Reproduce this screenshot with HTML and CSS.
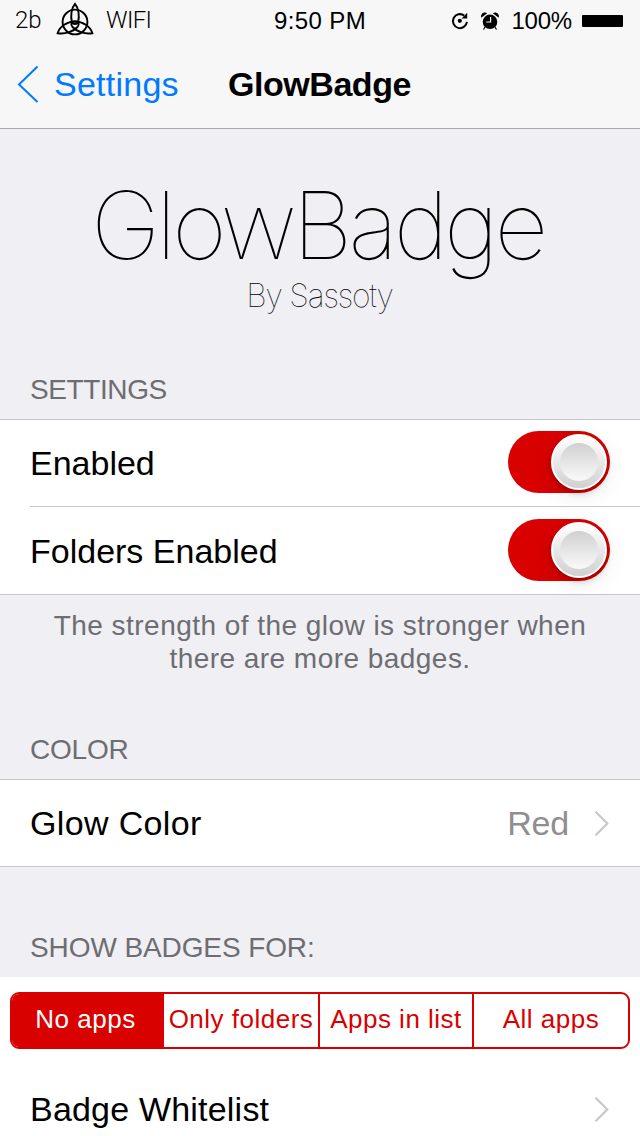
FILE: index.html
```html
<!DOCTYPE html>
<html lang="en">
<head>
<meta charset="utf-8">
<title>GlowBadge</title>
<link rel="stylesheet" href="styles.css">
</head>
<body>
<header class="top">
  <div class="status">
    <div class="status-left">
      <span class="carrier">2b</span>
      <svg class="trefoil" width="38" height="34" viewBox="0 0 38 34" fill="none" stroke="#000" stroke-width="1.900">
        <circle cx="19" cy="20" r="12.400"/>
        <path d="M19 1.800C15.300 6 14.300 14 16 20.500C17 22.500 21 22.500 22 20.500C23.700 14 22.700 6 19 1.800Z"/>
        <path d="M1.600 31.200C3.500 25 11 19 20 19.500C23 20 23.500 22.500 21.500 25C17 30 9 32.400 1.600 31.200Z"/>
        <path d="M36.400 31.200C34.500 25 27 19 18 19.500C15 20 14.500 22.500 16.500 25C21 30 29 32.400 36.400 31.200Z"/>
      </svg>
      <span class="network">WIFI</span>
    </div>
    <span class="clock">9:50 PM</span>
    <div class="status-right">
      <svg width="18" height="20" viewBox="0 0 18 20" fill="none" stroke="#000" stroke-width="2">
        <path d="M13.200 4.600A7 7 0 1 0 15.900 10.800"/>
        <path d="M16.200 1.800V7.500H10.500Z" fill="#000" stroke="none"/>
        <circle cx="8.800" cy="9.800" r="2.100" fill="#000" stroke="none"/>
      </svg>
      <svg class="alarm" width="20" height="20" viewBox="0 0 20 20">
        <circle cx="10" cy="10.800" r="7.300"/>
        <path d="M1.300 6.700C.2 3 4 .3 7.200 2.300ZM18.700 6.700C19.800 3 16 .3 12.800 2.300Z"/>
        <path d="M5 16L3.500 18.500M15 16L16.500 18.500" stroke="#000" stroke-width="1.200"/>
        <path d="M10.600 6V11H6.300" fill="none" stroke="#f7f7f7" stroke-width="1.200"/>
      </svg>
      <span class="percent">100%</span>
      <span class="battery"></span>
    </div>
  </div>
  <nav class="nav">
    <a class="back">
      <svg width="22" height="38" viewBox="0 0 22 38" fill="none" stroke="#007aff" stroke-width="2"><path d="M20.500 1.500L2 19.500L20.500 37"/></svg>
      <span>Settings</span>
    </a>
    <h1 class="title">GlowBadge</h1>
  </nav>
</header>
<main>
  <section class="hero">
    <div class="logo">GlowBadge</div>
    <div class="author">By Sassoty</div>
  </section>
  <h2 class="group-title">SETTINGS</h2>
  <section class="list">
    <div class="row first"><span>Enabled</span><span class="switch"><span class="knob"></span></span></div>
    <div class="row divided"><span class="folders">Folders Enabled</span><span class="switch"><span class="knob"></span></span></div>
  </section>
  <p class="note">The strength of the glow is stronger when<br>there are more badges.</p>
  <h2 class="group-title color-title">COLOR</h2>
  <section class="list">
    <div class="row"><span class="glow">Glow Color</span><span class="value">Red</span>
      <svg class="chevron" width="16" height="26" viewBox="0 0 16 26"><path d="M1.500 1.800L13.300 13.500L1.500 25.200"/></svg>
    </div>
  </section>
  <h2 class="group-title badges-title">SHOW BADGES FOR:</h2>
  <section class="badges">
    <div class="segments">
      <span class="segment selected">No apps</span>
      <span class="segment">Only folders</span>
      <span class="segment">Apps in list</span>
      <span class="segment">All apps</span>
    </div>
    <div class="row whitelist"><span>Badge Whitelist</span>
      <svg class="chevron" width="16" height="26" viewBox="0 0 16 26"><path d="M1.500 1.800L13.300 13.500L1.500 25.200"/></svg>
    </div>
  </section>
</main>
</body>
</html>
```
FILE: styles.css
```css
* { box-sizing: border-box; }
body {
  margin: 0;
  width: 640px;
  height: 1136px;
  overflow: hidden;
  background: #efeff4;
  color: #000;
  font-family: "Liberation Sans", Arial, sans-serif;
}
svg { display: block; flex: none; }
h1, h2, p { margin: 0; font-weight: 400; }
.top { height: 129px; background: #f7f7f7; border-bottom: 1px solid #a9a9ad; }
.status {
  display: grid;
  grid-template-columns: 1fr auto 1fr;
  align-items: center;
  height: 41px;
  padding: 0 17px 0 15px;
  font-size: 24px;
  line-height: 41px;
}
.status-left, .status-right { display: flex; align-items: center; }
.status-left { font-family: Roboto, sans-serif; font-weight: 300; }
.carrier { width: 41px; }
.network { margin-left: 12px; letter-spacing: -.6px; }
.trefoil { margin-top: -3px; }
.clock { letter-spacing: .4px; padding-left: 2px; }
.status-right { justify-content: flex-end; }
.alarm { margin-left: 11px; }
.percent { margin-left: 11px; letter-spacing: -.2px; }
.battery { width: 41px; height: 12px; margin-left: 10px; border-radius: 1px; background: #000; }
.nav {
  display: grid;
  grid-template-columns: 211px 1fr;
  align-items: center;
  height: 86px;
  padding-left: 17px;
  font-size: 34px;
}
.back { display: flex; align-items: center; gap: 15px; color: #007aff; letter-spacing: .25px; }
.title { font-size: 34px; font-weight: 700; letter-spacing: -.45px; }
.hero { height: 231px; padding-top: 40px; text-align: center; font-family: Inter, sans-serif; font-weight: 100; }
.logo { height: 114px; padding-right: 5px; font-size: 94px; line-height: 112px; letter-spacing: -4.2px; }
.author { font-size: 32px; line-height: 26px; letter-spacing: -1.3px; padding-right: 1px; }
.group-title { height: 59px; padding-left: 30px; font-size: 28px; line-height: 59px; color: #6d6d72; letter-spacing: -.4px; }
.color-title { letter-spacing: -.2px; }
.list { background: #fff; border-top: 1px solid #c8c7cc; border-bottom: 1px solid #c8c7cc; }
.row { display: flex; align-items: center; height: 86px; padding: 0 30px; font-size: 34px; }
.row > span:first-child { flex: 1; }
.first .switch { margin-bottom: 2px; }
.glow { letter-spacing: .35px; }
.folders { padding-top: 2px; }
.divided { position: relative; height: 88px; }
.divided::before { content: ""; position: absolute; top: 0; left: 30px; right: 0; height: 1px; background: #c8c7cc; }
.switch { display: flex; justify-content: flex-end; width: 102px; height: 62px; padding: 3px; border-radius: 31px; background: #d90000; }
.knob {
  display: grid;
  place-items: center;
  width: 56px;
  height: 56px;
  border: 2px solid #fff;
  border-radius: 50%;
  background: linear-gradient(#fff, #d0d0d0);
  box-shadow: 0 3px 6px rgba(0, 0, 0, .25), 0 6px 24px rgba(0, 0, 0, .08);
}
.knob::after { content: ""; width: 38px; height: 38px; border-radius: 50%; background: linear-gradient(#d0d0d0, #fafafa); }
.note { padding-top: 14px; height: 125px; font-size: 28px; line-height: 33px; text-align: center; color: #6d6d72; letter-spacing: .46px; }
.value { color: #8e8e93; margin-right: 25px; letter-spacing: -.2px; }
.chevron { fill: none; stroke: #c7c7cc; stroke-width: 2.2; }
.badges-title { height: 110px; padding-top: 51px; letter-spacing: -.1px; }
.badges { height: 160px; padding-top: 15px; background: #fff; }
.segments {
  display: grid;
  grid-template-columns: 151px 155px 154px 1fr;
  height: 57px;
  margin: 0 10px;
  overflow: hidden;
  border: 2px solid #d90000;
  border-radius: 9px;
  color: #d90000;
  font-size: 26px;
  line-height: 50px;
  text-align: center;
  letter-spacing: .5px;
}
.segment { white-space: nowrap; }
.segment + .segment { border-left: 2px solid #d90000; }
.selected { background: #d90000; color: #fff; padding-right: 4px; }
.segment.selected + .segment { border-left-width: 1px; }
.whitelist { margin-top: 17px; letter-spacing: .2px; }
```
